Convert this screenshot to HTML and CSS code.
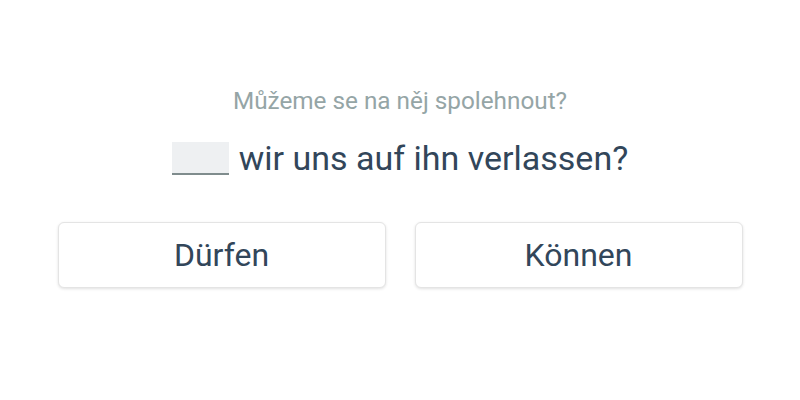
FILE: index.html
```html
<!DOCTYPE html>
<html lang="de">
<head>
<meta charset="utf-8">
<link rel="stylesheet" href="styles.css">
</head>
<body>
<main class="exercise">
  <p class="hint">Můžeme se na něj spolehnout?</p>
  <p class="sentence"><span class="blank"></span> wir uns auf ihn verlassen?</p>
  <div class="choices">
    <button class="choice">Dürfen</button>
    <button class="choice">Können</button>
  </div>
</main>
</body>
</html>
```
FILE: styles.css
```css
html, body {
  margin: 0;
  padding: 0;
  background: #ffffff;
}
body {
  font-family: Roboto, "Noto Sans", sans-serif;
  width: 800px;
  height: 400px;
}
.exercise {
  display: flex;
  flex-direction: column;
  align-items: center;
  padding-top: 84px;
}
.hint {
  margin: 0;
  font-size: 24.3px;
  line-height: 34px;
  color: #95a5a6;
}
.sentence {
  margin: 20px 0 0 0;
  font-size: 34px;
  line-height: 40px;
  color: #32465a;
  display: flex;
  align-items: center;
}
.blank {
  display: inline-block;
  width: 57px;
  height: 31px;
  background: #eef0f2;
  border-bottom: 2px solid #7f8c8d;
  margin-right: 10px;
}
.choices {
  display: flex;
  gap: 29px;
  margin-top: 44px;
}
.choice {
  width: 328px;
  height: 66px;
  background: #ffffff;
  border: 1px solid #e4e4e4;
  border-radius: 6px;
  box-shadow: 0 1px 3px rgba(0,0,0,0.12);
  font-family: Roboto, "Noto Sans", sans-serif;
  font-size: 32px;
  color: #32465a;
  padding: 0;
}
```
